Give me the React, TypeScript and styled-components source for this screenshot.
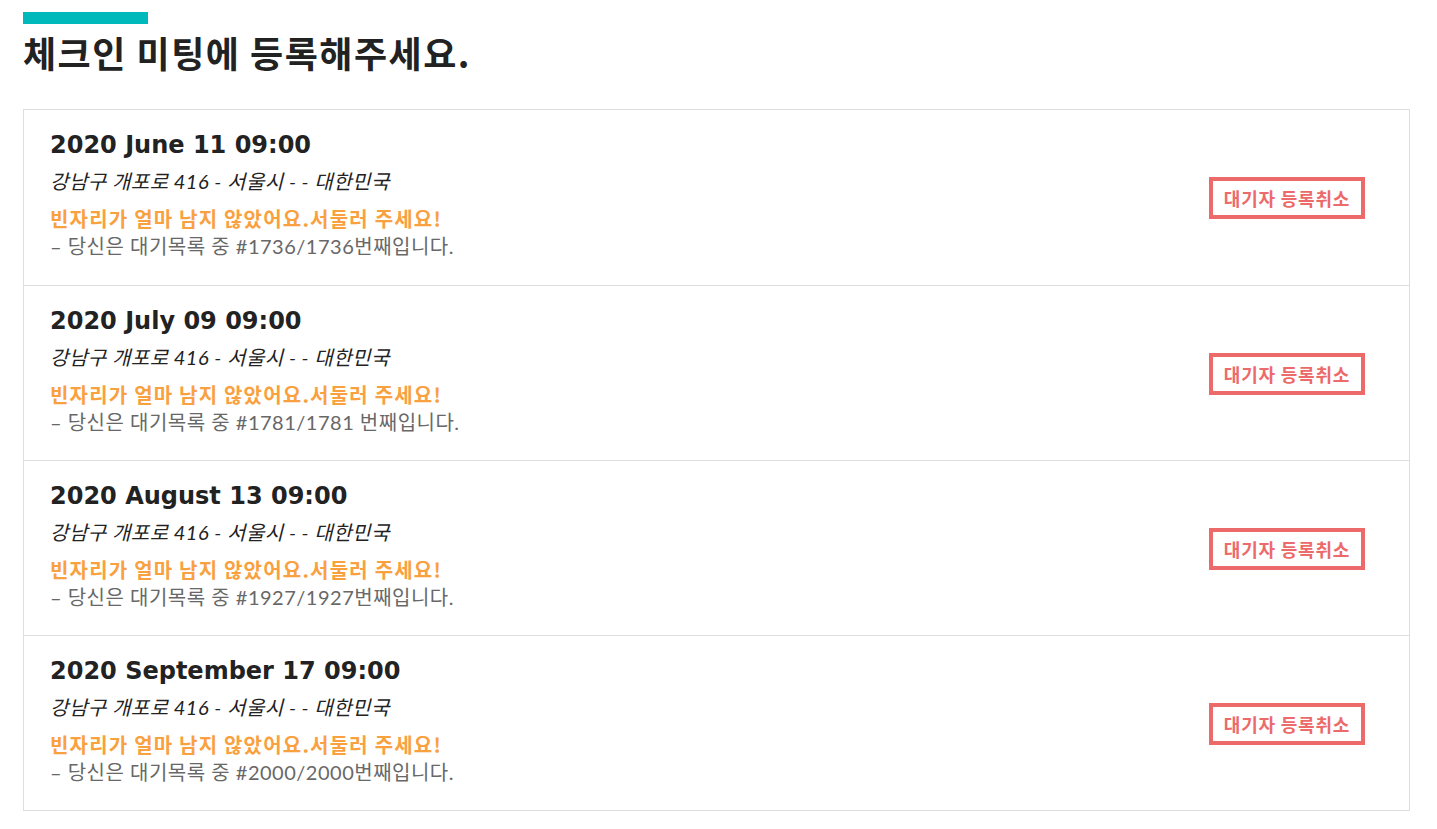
import React from "react";
import styled, { createGlobalStyle } from "styled-components";

const Global = createGlobalStyle`
  html, body { margin: 0; padding: 0; background: #fff; }
  body { font-family: "Lato", "Noto Sans CJK KR", sans-serif; color: #222; }
`;

const Page = styled.div`
  padding: 12px 27px 0 23px;
`;

const Accent = styled.div`
  width: 125px;
  height: 12px;
  background: #00b9bb;
`;

const Title = styled.h1`
  margin: 5px 0 0;
  font-family: "Noto Sans CJK KR", sans-serif;
  font-size: 36px;
  font-weight: 700;
  line-height: 46px;
  color: #222;
  letter-spacing: 1.5px;
`;

const List = styled.div`
  margin-top: 34px;
  border: 1px solid #dedede;
`;

const Row = styled.div`
  display: flex;
  align-items: flex-start;
  justify-content: space-between;
  height: 175px;
  padding: 19px 44px 0 26px;
  box-sizing: border-box;
  & + & { border-top: 1px solid #dedede; }
`;

const Info = styled.div`
  display: flex;
  flex-direction: column;
`;

const DateText = styled.div`
  font-family: "DejaVu Sans", sans-serif;
  font-size: 24px;
  font-weight: 700;
  line-height: 32px;
  color: #222;
`;

const Address = styled.div`
  margin-top: 6px;
  font-family: "Lato", "Noto Sans CJK KR", sans-serif;
  font-style: italic;
  font-size: 20px;
  letter-spacing: 0.5px;
  line-height: 28px;
  color: #222;
`;

const Hurry = styled.div`
  margin-top: 10px;
  font-family: "Noto Sans CJK KR", sans-serif;
  font-size: 20px;
  font-weight: 700;
  letter-spacing: 1.2px;
  line-height: 28px;
  color: #f9a03f;
`;

const Waiting = styled.div`
  margin-top: -1px;
  font-family: "Lato", "Noto Sans CJK KR", sans-serif;
  font-size: 20px;
  letter-spacing: 0.5px;
  line-height: 28px;
  color: #686868;
`;

const CancelButton = styled.button`
  align-self: center;
  width: 156px;
  height: 42px;
  margin-top: -18px;
  border: 4px solid #ec6a6a;
  background: #fff;
  color: #ec6a6a;
  font-family: "Noto Sans CJK KR", sans-serif;
  font-size: 18px;
  font-weight: 700;
  letter-spacing: 0.8px;
  padding: 0;
  cursor: pointer;
`;

const items = [
  { date: "2020 June 11 09:00", n: "1736/1736" },
  { date: "2020 July 09 09:00", n: "1781/1781 " },
  { date: "2020 August 13 09:00", n: "1927/1927" },
  { date: "2020 September 17 09:00", n: "2000/2000" },
];

export default function App() {
  return (
    <>
      <Global />
      <Page>
        <Accent />
        <Title>체크인 미팅에 등록해주세요.</Title>
        <List>
          {items.map((it) => (
            <Row key={it.date}>
              <Info>
                <DateText>{it.date}</DateText>
                <Address>강남구 개포로 416 - 서울시 - - 대한민국</Address>
                <Hurry>빈자리가 얼마 남지 않았어요.서둘러 주세요!</Hurry>
                <Waiting>– 당신은 대기목록 중 #{it.n}번째입니다.</Waiting>
              </Info>
              <CancelButton>대기자 등록취소</CancelButton>
            </Row>
          ))}
        </List>
      </Page>
    </>
  );
}
